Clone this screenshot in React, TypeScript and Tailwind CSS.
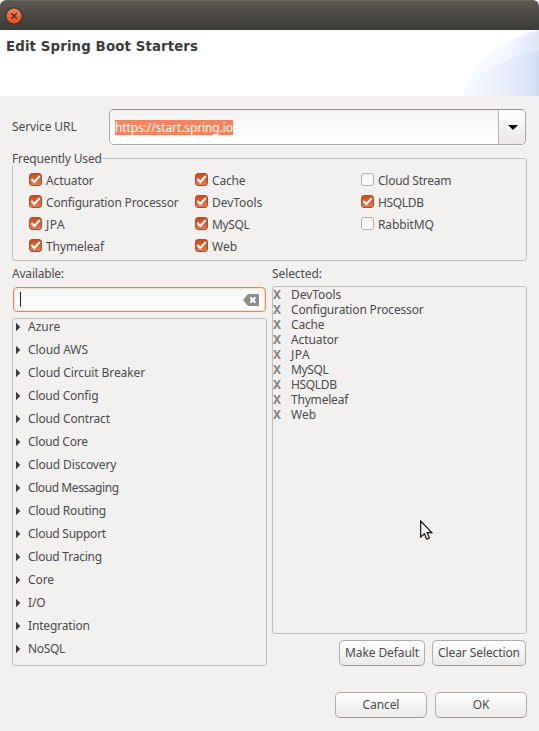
import React from "react";

type Item = { name: string; checked?: boolean; tracking?: string };

const frequent: Item[][] = [
  [
    { name: "Actuator", checked: true },
    { name: "Configuration Processor", checked: true, tracking: "tracking-[-0.17px]" },
    { name: "JPA", checked: true, tracking: "tracking-[0.5px]" },
    { name: "Thymeleaf", checked: true },
  ],
  [
    { name: "Cache", checked: true, tracking: "tracking-[-0.2px]" },
    { name: "DevTools", checked: true, tracking: "tracking-[-0.05px]" },
    { name: "MySQL", checked: true, tracking: "tracking-[-0.35px]" },
    { name: "Web", checked: true, tracking: "tracking-[0px]" },
  ],
  [
    { name: "Cloud Stream", checked: false, tracking: "tracking-[-0.25px]" },
    { name: "HSQLDB", checked: true, tracking: "tracking-[-0.35px]" },
    { name: "RabbitMQ", checked: false },
  ],
];

const available: Item[] = [
  { name: "Azure", tracking: "tracking-[0px]" },
  { name: "Cloud AWS" },
  { name: "Cloud Circuit Breaker" },
  { name: "Cloud Config", tracking: "tracking-[-0.2px]" },
  { name: "Cloud Contract", tracking: "tracking-[-0.15px]" },
  { name: "Cloud Core", tracking: "tracking-[-0.25px]" },
  { name: "Cloud Discovery", tracking: "tracking-[-0.13px]" },
  { name: "Cloud Messaging", tracking: "tracking-[-0.42px]" },
  { name: "Cloud Routing", tracking: "tracking-[-0.18px]" },
  { name: "Cloud Support", tracking: "tracking-[-0.25px]" },
  { name: "Cloud Tracing", tracking: "tracking-[-0.25px]" },
  { name: "Core" },
  { name: "I/O" },
  { name: "Integration", tracking: "tracking-[-0.15px]" },
  { name: "NoSQL", tracking: "tracking-[-0.35px]" },
];

const selected: Item[] = [
  { name: "DevTools", tracking: "tracking-[-0.05px]" },
  { name: "Configuration Processor", tracking: "tracking-[-0.17px]" },
  { name: "Cache", tracking: "tracking-[-0.2px]" },
  { name: "Actuator" },
  { name: "JPA", tracking: "tracking-[0.5px]" },
  { name: "MySQL", tracking: "tracking-[-0.35px]" },
  { name: "HSQLDB", tracking: "tracking-[-0.35px]" },
  { name: "Thymeleaf", tracking: "tracking-[-0.2px]" },
  { name: "Web", tracking: "tracking-[0px]" },
];

function CheckBox({ checked }: { checked?: boolean }) {
  if (!checked) {
    return (
      <span className="mb-[1px] h-[13px] w-[13px] shrink-0 rounded-[3px] border border-[#b5b3b0] bg-gradient-to-b from-[#f3f3f3] to-white" />
    );
  }
  return (
    <span className="mb-[1px] flex h-[13px] w-[13px] shrink-0 items-center justify-center rounded-[3px] border border-[#a8502e] bg-gradient-to-b from-[#cf4a1b] to-[#e27a50]">
      <svg width="11" height="11" viewBox="0 0 11 11" fill="none">
        <path d="M1.4 5 L4.3 8 L9.8 2" stroke="#fff" strokeWidth="2" />
      </svg>
    </span>
  );
}

function Button({ label, className }: { label: string; className: string }) {
  return (
    <button
      className={`flex h-[26px] items-center justify-center whitespace-nowrap rounded-[5px] border border-[#b0aeab] border-b-[#9d9b98] bg-gradient-to-b from-white to-[#ebeae9] leading-none ${className}`}
    >
      {label}
    </button>
  );
}

export default function App() {
  return (
    <div className="flex h-[731px] w-[539px] flex-col overflow-hidden bg-white font-['Noto_Sans',sans-serif] text-[12px] leading-none tracking-[-0.1px] text-[#4c4c4c]">
      <div className="flex h-[30px] shrink-0 items-center rounded-t-[6px] border-t border-[#6b6860] bg-gradient-to-b from-[#5b5851] to-[#3d3b36] pl-[5px]">
        <svg width="18" height="18" viewBox="0 0 18 18">
          <defs>
            <linearGradient id="close" x1="0" y1="0" x2="0" y2="1">
              <stop offset="0" stopColor="#f4845f" />
              <stop offset="1" stopColor="#e04e1b" />
            </linearGradient>
          </defs>
          <circle cx="9" cy="9" r="8.2" fill="url(#close)" stroke="#37332d" strokeWidth="1.2" />
          <path d="M6.3 6.3 L11.7 11.7 M11.7 6.3 L6.3 11.7" stroke="#4a2b1b" strokeWidth="1.4" />
        </svg>
      </div>

      <div className="flex h-[66px] shrink-0 items-start justify-between bg-white">
        <h1 className="pl-[6px] pt-[9px] font-['DejaVu_Sans',sans-serif] text-[13.33px] font-bold leading-[15px] tracking-[0.12px] text-[#3c3c3c]">
          Edit Spring Boot Starters
        </h1>
        <svg width="75" height="66" viewBox="0 0 75 66">
          <defs>
            <linearGradient id="outer" x1="0" y1="0" x2="1" y2="0">
              <stop offset="0" stopColor="#f7f9fe" />
              <stop offset="0.6" stopColor="#f4f7fd" />
              <stop offset="1" stopColor="#e6edfa" />
            </linearGradient>
            <linearGradient id="mid" x1="0" y1="0" x2="1" y2="0">
              <stop offset="0" stopColor="#f1f5fd" />
              <stop offset="1" stopColor="#dde6f8" />
            </linearGradient>
            <linearGradient id="inner" x1="0" y1="0" x2="1" y2="0">
              <stop offset="0" stopColor="#f6f9fe" />
              <stop offset="0.6" stopColor="#e6edfa" />
              <stop offset="0.85" stopColor="#dce5f7" />
              <stop offset="1" stopColor="#cfdbf4" />
            </linearGradient>
          </defs>
          <path d="M0 66 C1 43 38 6 75 0 V66 Z" fill="url(#outer)" />
          <path d="M41 34 C47 20 58 6 75 1 V34 Z" fill="url(#mid)" />
          <path d="M0 66 C3 54 40 25 75 21 V66 Z" fill="url(#inner)" />
        </svg>
      </div>

      <div className="flex min-h-0 flex-1 flex-col bg-[#f2f1f0] pl-[12px] pr-[12px] pt-[13px]">
        <div className="flex h-[36px] shrink-0 items-center">
          <label className="w-[97px] tracking-[-0.1px]">Service URL</label>
          <div className="flex h-[36px] w-[417px] overflow-hidden rounded-[5px] border border-[#aaa8a5] border-t-[#8f9190] shadow-[0_1px_0_#f9f9f9]">
            <div className="flex flex-1 items-center bg-gradient-to-b from-[#f3f3f3] to-white pl-[5px]">
              <span className="bg-[#f4845b] leading-[15px] text-white">https://start.spring.io</span>
            </div>
            <div className="flex w-[27px] items-center justify-center border-l border-[#b5b3b0] bg-gradient-to-b from-white to-[#e9e8e7] pl-[2px]">
              <svg width="10" height="5" viewBox="0 0 10 5">
                <path d="M0 0 H10 L5 5 Z" fill="#000" />
              </svg>
            </div>
          </div>
        </div>

        <fieldset className="mt-[6px] h-[110px] w-[515px] shrink-0 rounded-[3px] border border-[#c1bfbd]">
          <legend className="-ml-[1px] h-[15px] bg-[#f2f1f0] leading-[15px] tracking-[-0.15px]">Frequently Used</legend>
          <div className="flex pl-[16px] pt-[3px]">
            {frequent.map((column, i) => (
              <div key={i} className="w-[166px] shrink-0 last:w-[150px]">
                {column.map((s) => (
                  <div key={s.name} className="flex h-[22px] items-center gap-[4px] whitespace-nowrap">
                    <CheckBox checked={s.checked} />
                    <span className={`pt-[1px] ${s.tracking ?? ""}`}>{s.name}</span>
                  </div>
                ))}
              </div>
            ))}
          </div>
        </fieldset>

        <div className="mt-[5px] flex shrink-0 gap-[5px]">
          <section className="w-[255px]">
            <h2 className="h-[21px] leading-[15px] tracking-[-0.2px]">Available:</h2>
            <div className="ml-[1px] flex h-[25px] w-[253px] items-center justify-between rounded-[4px] border border-[#e5875f] bg-gradient-to-b from-[#f5f5f5] to-white pl-[6px] pr-[6px] shadow-[inset_0_0_0_1px_#f8dfd5]">
              <span className="h-[15px] w-[1px] bg-[#222]" />
              <svg width="16" height="12" viewBox="0 0 16 12">
                <path d="M0 6 L5 0 H15 Q16 0 16 1 V11 Q16 12 15 12 H5 Z" fill="#8f8d87" />
                <path d="M7.3 3.3 L12.3 8.7 M12.3 3.3 L7.3 8.7" stroke="#fff" strokeWidth="2" />
              </svg>
            </div>
            <ul className="mt-[6px] h-[348px] overflow-hidden rounded-[3px] border border-[#c1bfbd]">
              {available.map((s) => (
                <li key={s.name} className="flex h-[23px] items-center pl-[3px] first:-mt-[4px]">
                  <svg width="4" height="8" viewBox="0 0 4 8" className="mr-[8px] overflow-visible">
                    <path d="M0 -0.3 L4.3 4 L0 8.3 Z" fill="#3c3c3c" />
                  </svg>
                  <span className={s.tracking ?? ""}>{s.name}</span>
                </li>
              ))}
            </ul>
          </section>

          <section className="w-[255px]">
            <h2 className="h-[20px] leading-[15px]">Selected:</h2>
            <ul className="h-[348px] rounded-[3px] border border-[#c1bfbd]">
              {selected.map((s) => (
                <li key={s.name} className="flex h-[15px] items-center leading-[15px]">
                  <span className="w-[18px] font-bold text-[#848484]">X</span>
                  <span className={s.tracking ?? ""}>{s.name}</span>
                </li>
              ))}
            </ul>
            <div className="mt-[6px] flex justify-end gap-[7px] pr-[1px]">
              <Button label="Make Default" className="w-[86px]" />
              <Button label="Clear Selection" className="w-[94px]" />
            </div>
          </section>
        </div>

        <div className="mt-[26px] flex shrink-0 justify-end gap-[8px]">
          <Button label="Cancel" className="w-[92px]" />
          <Button label="OK" className="w-[92px]" />
        </div>
      </div>

      <svg className="absolute left-[420px] top-[520px]" width="14" height="22" viewBox="0 0 14 22">
        <path
          d="M0.7 1 V17 L4.4 13.7 L6.8 19.2 L9.4 18 L7 12.6 H11.8 Z"
          fill="#fff"
          stroke="#111"
          strokeWidth="1.2"
        />
      </svg>
    </div>
  );
}
